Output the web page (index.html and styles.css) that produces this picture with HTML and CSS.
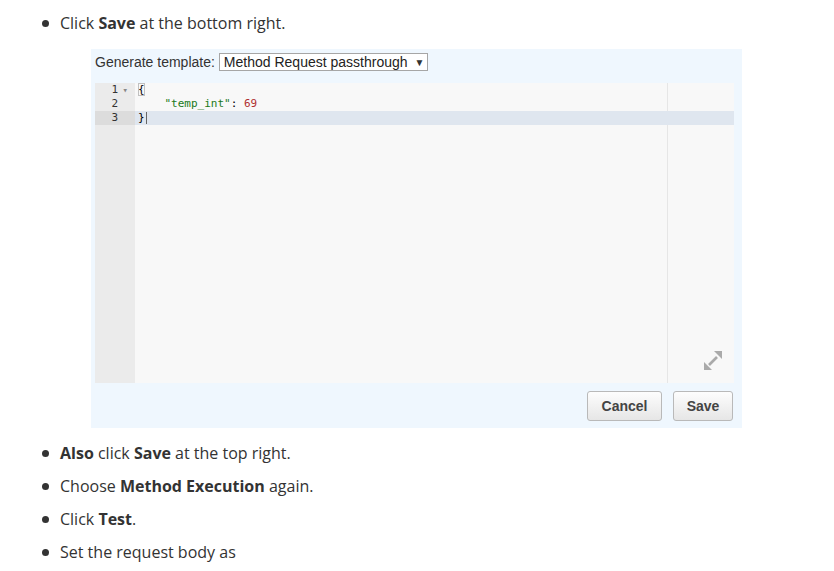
FILE: index.html
```html
<!DOCTYPE html>
<html>
<head>
<meta charset="utf-8">
<link rel="stylesheet" href="styles.css">
</head>
<body>
<ul class="steps">
  <li class="first">
    <div class="line">Click <b>Save</b> at the bottom right.</div>
    <div class="figure">
      <div class="gen-row">
        <span class="gen-label">Generate template:</span>
        <span class="select">Method Request passthrough <span class="caret">▼</span></span>
      </div>
      <div class="editor">
        <div class="gutter">
          <div class="ln"><span class="fold">▾</span>1</div>
          <div class="ln">2</div>
          <div class="ln active">3</div>
        </div>
        <div class="code">
          <div class="margin-line"></div>
          <div class="cl"><span class="brk">{</span></div>
          <div class="cl">    <span class="str">"temp_int"</span>: <span class="num">69</span></div>
          <div class="cl active">}<span class="cursor"></span></div>
          <svg class="expand" width="18" height="19" viewBox="0 0 18 19">
            <path d="M5 14 L13 6" stroke="#aaaaaa" stroke-width="2.6" fill="none"/>
            <path d="M0 19 L0 11 L8 19 Z" fill="#aaaaaa"/>
            <path d="M18 0 L18 8 L10 0 Z" fill="#aaaaaa"/>
          </svg>
        </div>
      </div>
      <div class="actions">
        <button class="btn cancel">Cancel</button>
        <button class="btn save">Save</button>
      </div>
    </div>
  </li>
  <li><div class="line"><b>Also</b> click <b>Save</b> at the top right.</div></li>
  <li><div class="line">Choose <b>Method Execution</b> again.</div></li>
  <li><div class="line">Click <b>Test</b>.</div></li>
  <li><div class="line">Set the request body as</div></li>
</ul>
</body>
</html>
```
FILE: styles.css
```css
html, body {
  margin: 0;
  padding: 0;
  background: #ffffff;
}
body {
  font-family: "Open Sans", "Liberation Sans", sans-serif;
  font-size: 16px;
  color: #333333;
}
.steps {
  margin: 0;
  padding: 11px 0 0 60px;
  list-style: none;
}
.steps li {
  margin-bottom: 9px;
  position: relative;
}
.steps li.first {
  margin-bottom: 13px;
}
.steps li::before {
  content: "";
  position: absolute;
  left: -18px;
  top: 9px;
  width: 7px;
  height: 7px;
  border-radius: 50%;
  background: #333;
}
.line {
  line-height: 24px;
}
.line b {
  font-weight: 700;
}
.figure {
  margin: 14px 0 0 31px;
  width: 651px;
  box-sizing: border-box;
  background: #eff7fe;
  padding: 4px 8px 7px 4px;
  font-family: "Liberation Sans", Arial, sans-serif;
}
.gen-row {
  display: flex;
  align-items: center;
  height: 18px;
  font-size: 14px;
  color: #333;
}
.gen-label {
  margin-right: 4px;
}
.select {
  display: flex;
  align-items: center;
  height: 18px;
  box-sizing: border-box;
  width: 209px;
  border: 1px solid #a6a6a6;
  background: #fff;
  padding: 0 4px;
  font-size: 14px;
  color: #222;
  white-space: pre;
}
.caret {
  font-size: 10px;
  margin-left: 3px;
  color: #333;
}
.editor {
  margin-top: 12px;
  height: 300px;
  display: flex;
  background: #f8f8f8;
}
.gutter {
  width: 40px;
  background: #ebebeb;
  font-family: "DejaVu Sans Mono", "Liberation Mono", monospace;
  font-size: 11px;
  color: #333;
}
.ln {
  height: 14px;
  line-height: 14px;
  text-align: right;
  padding-right: 17px;
  position: relative;
}
.ln.active {
  background: #dcdcdc;
}
.fold {
  position: absolute;
  right: 7px;
  top: 0;
  font-size: 9px;
  color: #888;
}
.code {
  flex: 1;
  position: relative;
  font-family: "DejaVu Sans Mono", "Liberation Mono", monospace;
  font-size: 11px;
  color: #000;
}
.cl {
  height: 14px;
  line-height: 14px;
  padding-left: 3px;
  white-space: pre;
  position: relative;
}
.cl.active {
  background: #dfe6ef;
}
.brk {
  outline: 1px solid #c0c0c0;
  outline-offset: -1px;
}
.str {
  color: #1a7a1a;
}
.num {
  color: #b03030;
}
.cursor {
  display: inline-block;
  width: 1px;
  height: 12px;
  background: #666;
  vertical-align: middle;
  margin-left: 1px;
}
.margin-line {
  position: absolute;
  left: 532px;
  top: 0;
  bottom: 0;
  width: 1px;
  background: #e6e6e6;
}
.expand {
  position: absolute;
  right: 12px;
  bottom: 13px;
}
.actions {
  display: flex;
  justify-content: flex-end;
  gap: 11px;
  margin-top: 8px;
  padding-right: 1px;
}
.btn {
  height: 30px;
  box-sizing: border-box;
  border: 1px solid #b9b9b9;
  border-radius: 3px;
  background: linear-gradient(#fdfdfd, #e6e6e6);
  font-family: "Liberation Sans", Arial, sans-serif;
  font-weight: 700;
  font-size: 14px;
  color: #444;
  padding: 0;
}
.cancel {
  width: 75px;
}
.save {
  width: 60px;
}
```
